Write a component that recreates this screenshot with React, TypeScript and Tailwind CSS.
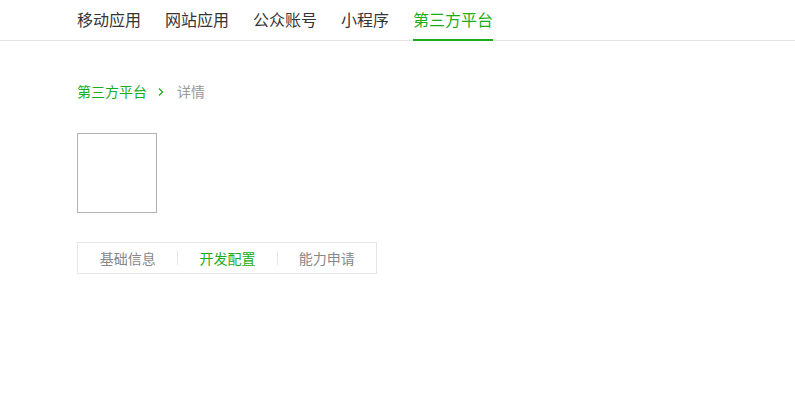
import React, { useState } from "react";

const navItems = ["移动应用", "网站应用", "公众账号", "小程序", "第三方平台"];
const tabs = ["基础信息", "开发配置", "能力申请"];

const App = () => {
  const [activeNav] = useState<number>(4);
  const [activeTab, setActiveTab] = useState<number>(1);

  return (
    <div
      className="min-h-[419px] bg-white text-[#353535]"
      style={{ fontFamily: '"Noto Sans CJK SC", "Noto Sans", sans-serif' }}
    >
      <div className="border-b border-[#e5e5e5]">
        <ul className="flex gap-6 px-[77px]">
          {navItems.map((item, i) => (
            <li
              key={item}
              className={`h-[41px] -mb-px leading-[38px] text-[16px] cursor-pointer ${
                i === activeNav
                  ? "text-[#1aad19] border-b-2 border-[#1aad19]"
                  : "text-[#353535]"
              }`}
            >
              {item}
            </li>
          ))}
        </ul>
      </div>

      <div className="px-[77px] pt-[40px]">
        <div className="flex items-center h-5 text-[14px] leading-5">
          <span className="text-[#1aad19]">第三方平台</span>
          <svg
            width="8"
            height="10"
            viewBox="0 0 8 10"
            className="ml-[10px] mr-[12px] mt-[2px]"
          >
            <path
              d="M2 1.5 L5.5 5 L2 8.5"
              fill="none"
              stroke="#1aad19"
              strokeWidth="1.2"
            />
          </svg>
          <span className="text-[#999]">详情</span>
        </div>

        <div className="mt-[32px] w-20 h-20 border border-[#b2b2b2]" />

        <div className="mt-[29px] flex w-[300px] h-[32px] border border-[#e5e5e5] text-[14px]">
          {tabs.map((tab, i) => (
            <div
              key={tab}
              onClick={() => setActiveTab(i)}
              className="flex-1 flex items-center cursor-pointer"
            >
              {i > 0 && <span className="w-px h-[14px] bg-[#e5e5e5]" />}
              <span
                className={`flex-1 text-center ${
                  i === activeTab ? "text-[#1aad19]" : "text-[#888]"
                }`}
              >
                {tab}
              </span>
            </div>
          ))}
        </div>
      </div>
    </div>
  );
};

export default App;
